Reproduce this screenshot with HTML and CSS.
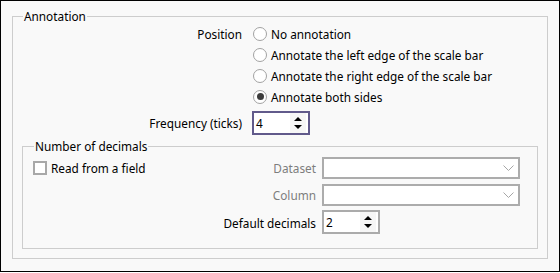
FILE: index.html
```html
<!DOCTYPE html>
<html>
<head>
<meta charset="utf-8">
<link rel="stylesheet" href="styles.css">
</head>
<body>
<div class="frame">
  <fieldset class="group annot">
    <legend>Annotation</legend>
    <div class="form">
      <div class="label pos-label">Position</div>
      <label class="radio"><span class="circle"></span>No annotation</label>
      <label class="radio"><span class="circle"></span>Annotate the left edge of the scale bar</label>
      <label class="radio"><span class="circle"></span>Annotate the right edge of the scale bar</label>
      <label class="radio"><span class="circle checked"></span>Annotate both sides</label>
      <div class="label freq-label">Frequency (ticks)</div>
      <div class="spin focused freq-spin"><span class="val">4</span><span class="arrows"><i class="up"></i><i class="down"></i></span></div>
    </div>
    <fieldset class="group decimals">
      <legend>Number of decimals</legend>
      <div class="dgrid">
        <label class="check"><span class="box"></span>Read from a field</label>
        <div class="label dim">Dataset</div>
        <div class="combo"><svg class="chev" width="11" height="6" viewBox="0 0 11 6"><polyline points="0.5,0.5 5.5,5.5 10.5,0.5" fill="none" stroke="#a6a6a6" stroke-width="1"/></svg></div>
        <div class="label dim c2">Column</div>
        <div class="combo"><svg class="chev" width="11" height="6" viewBox="0 0 11 6"><polyline points="0.5,0.5 5.5,5.5 10.5,0.5" fill="none" stroke="#a6a6a6" stroke-width="1"/></svg></div>
        <div class="label c2">Default decimals</div>
        <div class="spin dec-spin"><span class="val">2</span><span class="arrows"><i class="up"></i><i class="down"></i></span></div>
      </div>
    </fieldset>
  </fieldset>
</div>
</body>
</html>
```
FILE: styles.css
```css
html, body {
  margin: 0;
  padding: 0;
  background: #ffffff;
}
body {
  font-family: "Segoe UI", "Noto Sans", "Open Sans", sans-serif;
  font-size: 11.8px;
  line-height: 16px;
  color: #000;
}
.frame {
  box-sizing: border-box;
  width: 560px;
  height: 272px;
  border: 1px solid #000;
  background: #f9f9f9;
  padding: 7px 11px 0 11px;
}
.group {
  margin: 0;
  padding: 0;
  border: 1px solid #cdcdcd;
  min-width: 0;
}
.group > legend {
  padding: 0 1px;
  line-height: 16px;
}
.annot {
  padding-bottom: 9px;
}
.annot > legend {
  margin-left: 10px;
}
.form {
  display: grid;
  grid-template-columns: 229px 1fr;
  grid-template-rows: 21px 21px 21px 21px 28px;
  column-gap: 10px;
  margin-top: -1px;
}
.label {
  text-align: right;
  align-self: center;
  white-space: nowrap;
}
.pos-label {
  grid-column: 1;
  grid-row: 1;
}
.radio {
  grid-column: 2;
  display: flex;
  align-items: center;
  gap: 4px;
  white-space: nowrap;
}
.circle {
  box-sizing: border-box;
  width: 14px;
  height: 14px;
  margin-left: 1px;
  border: 1.5px solid #a2a2a2;
  border-radius: 50%;
  background: #fff;
  display: flex;
  align-items: center;
  justify-content: center;
}
.circle.checked::after {
  content: "";
  width: 7px;
  height: 7px;
  border-radius: 50%;
  background: #3c3c3c;
}
.freq-label {
  grid-column: 1;
  grid-row: 5;
  margin-top: 4px;
}
.freq-spin {
  grid-column: 2;
  grid-row: 5;
  margin-top: 4px;
}
.spin {
  box-sizing: border-box;
  width: 58px;
  height: 24px;
  border: 2px solid #ababab;
  background: #fff;
  display: flex;
  align-items: center;
  justify-content: space-between;
}
.spin.focused {
  border-color: #615a8b;
}
.spin .val {
  padding-left: 2px;
}
.arrows {
  align-self: stretch;
  width: 16px;
  margin-right: 2px;
  background: #f6f6f6;
  display: flex;
  flex-direction: column;
  align-items: center;
  justify-content: center;
  gap: 4px;
}
.arrows i {
  display: block;
  width: 0;
  height: 0;
  border-left: 4px solid transparent;
  border-right: 4px solid transparent;
}
.arrows .up {
  border-bottom: 4px solid #000;
}
.arrows .down {
  border-top: 4px solid #000;
}
.decimals {
  margin: 3px 9px 0 9px;
  padding-bottom: 13px;
}
.decimals > legend {
  margin-left: 11px;
}
.dgrid {
  display: grid;
  grid-template-columns: 1fr auto 198px;
  grid-template-rows: 22px 22px 24px;
  column-gap: 6px;
  row-gap: 5px;
  padding: 3px 17px 0 10px;
}
.check {
  grid-column: 1;
  grid-row: 1;
  display: flex;
  align-items: center;
  gap: 4px;
  white-space: nowrap;
}
.box {
  box-sizing: border-box;
  width: 14px;
  height: 14px;
  border: 2px solid #a8a8a8;
  background: #fff;
}
.c2 {
  grid-column: 2;
}
.dim {
  color: #7d7d7d;
}
.combo {
  grid-column: 3;
  box-sizing: border-box;
  height: 22px;
  border: 2px solid #acacac;
  background: #fff;
  display: flex;
  align-items: center;
  justify-content: flex-end;
  padding-right: 4px;
}
.dec-spin {
  grid-column: 3;
  margin-top: -1px;
}
```
